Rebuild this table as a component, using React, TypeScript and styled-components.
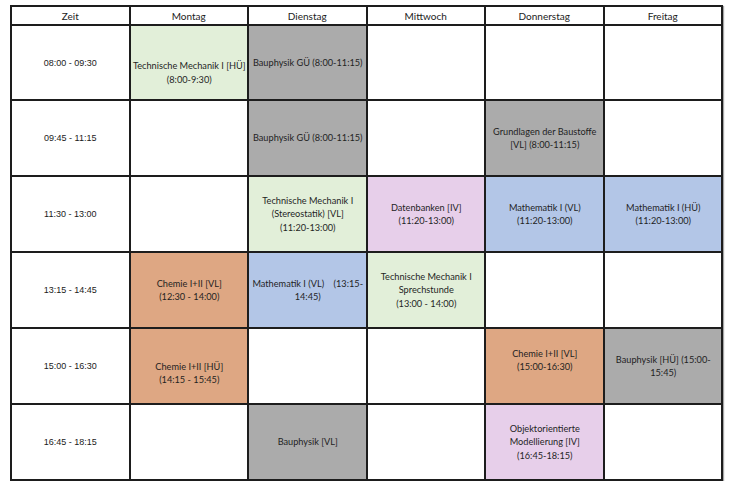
import React from "react";
import styled, { createGlobalStyle } from "styled-components";

// Weekly lecture timetable (Stundenplan)
type Tone = "white" | "green" | "grey" | "blue" | "orange" | "purple";

const tones: Record<Tone, string> = {
  white: "#ffffff",
  green: "#e2efd9",
  grey: "#ababab",
  blue: "#b3c6e7",
  orange: "#dea783",
  purple: "#e7cfea",
};

interface Slot {
  lines: string[];
  tone: Tone;
  nudge?: number;
}

const days = ["Montag", "Dienstag", "Mittwoch", "Donnerstag", "Freitag"];

const rows: { time: string; slots: (Slot | null)[] }[] = [
  {
    time: "08:00 - 09:30",
    slots: [
      { lines: ["Technische Mechanik I [HÜ]", "(8:00-9:30)"], tone: "green", nudge: 10 },
      { lines: ["Bauphysik GÜ (8:00-11:15)"], tone: "grey" },
      null,
      null,
      null,
    ],
  },
  {
    time: "09:45 - 11:15",
    slots: [
      null,
      { lines: ["Bauphysik GÜ (8:00-11:15)"], tone: "grey" },
      null,
      { lines: ["Grundlagen der Baustoffe", "[VL] (8:00-11:15)"], tone: "grey" },
      null,
    ],
  },
  {
    time: "11:30 - 13:00",
    slots: [
      null,
      { lines: ["Technische Mechanik I", "(Stereostatik) [VL]", "(11:20-13:00)"], tone: "green" },
      { lines: ["Datenbanken [IV]", "(11:20-13:00)"], tone: "purple" },
      { lines: ["Mathematik I (VL)", "(11:20-13:00)"], tone: "blue" },
      { lines: ["Mathematik I (HÜ)", "(11:20-13:00)"], tone: "blue" },
    ],
  },
  {
    time: "13:15 - 14:45",
    slots: [
      { lines: ["Chemie I+II [VL]", "(12:30 - 14:00)"], tone: "orange" },
      { lines: ["Mathematik I (VL)    (13:15-", "14:45)"], tone: "blue" },
      { lines: ["Technische Mechanik I", "Sprechstunde", "(13:00 - 14:00)"], tone: "green" },
      null,
      null,
    ],
  },
  {
    time: "15:00 - 16:30",
    slots: [
      { lines: ["Chemie I+II [HÜ]", "(14:15 - 15:45)"], tone: "orange", nudge: 7 },
      null,
      null,
      { lines: ["Chemie I+II [VL]", "(15:00-16:30)"], tone: "orange", nudge: -6 },
      { lines: ["Bauphysik [HÜ] (15:00-", "15:45)"], tone: "grey" },
    ],
  },
  {
    time: "16:45 - 18:15",
    slots: [
      null,
      { lines: ["Bauphysik [VL]"], tone: "grey" },
      null,
      { lines: ["Objektorientierte", "Modellierung [IV]", "(16:45-18:15)"], tone: "purple" },
      null,
    ],
  },
];

const App: React.FC = () => {
  return (
    <>
      <GlobalStyle />
      <Table>
        <HeadCell>Zeit</HeadCell>
        {days.map((day) => (
          <HeadCell key={day}>{day}</HeadCell>
        ))}

        {rows.map((row) => (
          <React.Fragment key={row.time}>
            <TimeCell>{row.time}</TimeCell>
            {row.slots.map((slot, i) =>
              slot ? (
                <Cell key={i} $bg={tones[slot.tone]} $nudge={slot.nudge ?? 0}>
                  {slot.lines.map((line) => (
                    <Line key={line}>{line}</Line>
                  ))}
                </Cell>
              ) : (
                <Cell key={i} $bg={tones.white} $nudge={0} />
              )
            )}
          </React.Fragment>
        ))}
      </Table>
    </>
  );
};

export default App;

// Styles
const GlobalStyle = createGlobalStyle`
  html, body {
    margin: 0;
    padding: 0;
    background: #ffffff;
  }
`;

const Table = styled.div`
  display: grid;
  grid-template-columns: repeat(6, 1fr);
  grid-template-rows: 17px 73px repeat(5, 74px);
  gap: 2px;
  padding: 2px;
  width: 713px;
  margin: 5px 0 0 10px;
  box-sizing: border-box;
  background: #1d1d1d;
  box-shadow: 1px 1px 1px rgba(0, 0, 0, 0.35);
`;

const HeadCell = styled.div`
  display: flex;
  align-items: center;
  justify-content: center;
  background: #ffffff;
  color: #222;
  font-family: Lato, "Liberation Sans", sans-serif;
  font-size: 10px;
`;

const TimeCell = styled.div`
  display: flex;
  align-items: center;
  justify-content: center;
  background: #ffffff;
  color: #1a1a1a;
  font-family: "Liberation Sans", Arial, sans-serif;
  font-size: 9px;
`;

const Cell = styled.div<{ $bg: string; $nudge: number }>`
  display: flex;
  flex-direction: column;
  align-items: stretch;
  justify-content: center;
  overflow: hidden;
  background: ${(p) => p.$bg};
  color: #1f1f1f;
  font-family: Lato, "Liberation Sans", sans-serif;
  font-size: 9.2px;
  line-height: 13.5px;
  padding-left: 1px;
  padding-top: ${(p) => Math.max(0, p.$nudge * 2)}px;
  padding-bottom: ${(p) => Math.max(0, -p.$nudge * 2)}px;
`;

const Line = styled.div`
  white-space: pre;
  text-align: center;
`;
